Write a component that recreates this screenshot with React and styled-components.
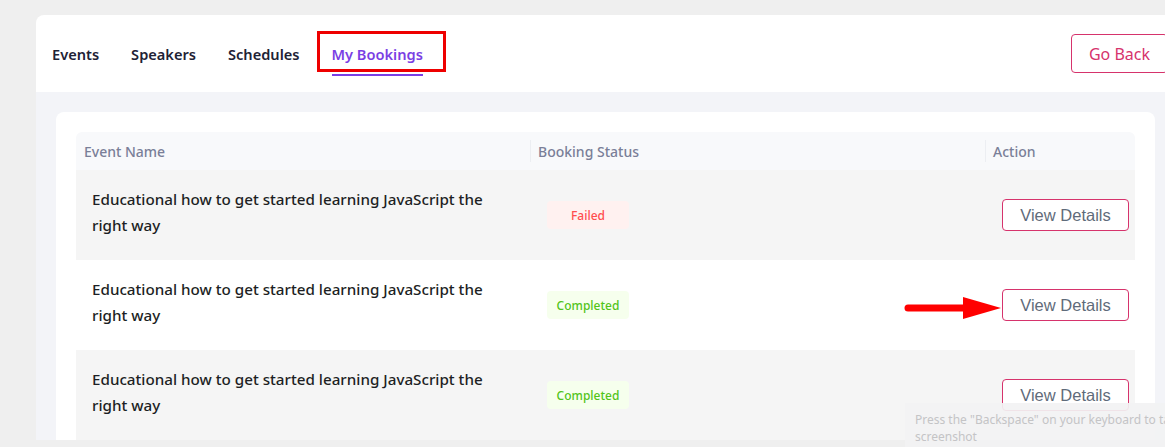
import React from 'react';
import styled, { createGlobalStyle } from 'styled-components';

const GlobalStyle = createGlobalStyle`
  body {
    margin: 0;
    background: #efefef;
    overflow: hidden;
    font-family: "Noto Sans", "Open Sans", sans-serif;
  }
`;

const Page = styled.div`
  position: relative;
  padding: 15px 0 0 36px;
  height: 432px;
`;

const Card = styled.div`
  width: 1150px;
  background: #fff;
  border-radius: 8px 8px 0 0;
  overflow: hidden;
`;

const Header = styled.div`
  height: 77px;
  display: flex;
  align-items: center;
  justify-content: space-between;
  padding: 0 18px 0 16px;
`;

const Tabs = styled.nav`
  display: flex;
  align-items: center;
  gap: 32px;
  height: 100%;
`;

const Tab = styled.div`
  position: relative;
  height: 100%;
  display: flex;
  align-items: center;
  font-size: 14.6px;
  font-weight: 600;
  color: ${(p) => (p.$active ? '#7b3fe4' : '#1e2235')};

  &::after {
    content: '';
    display: ${(p) => (p.$active ? 'block' : 'none')};
    position: absolute;
    left: 0;
    right: 0;
    bottom: 16px;
    height: 2px;
    background: #7b3fe4;
  }
`;

// red annotation frame drawn over the active tab
const Highlight = styled.span`
  position: absolute;
  left: -15px;
  right: -23px;
  top: 16px;
  bottom: 20px;
  border: 3px solid #ee0000;
`;

const GoBack = styled.button`
  height: 39px;
  padding: 0 17px;
  background: #fff;
  border: 1px solid #d6336c;
  border-radius: 4px;
  color: #d6336c;
  font-family: inherit;
  font-size: 16px;
`;

const Body = styled.div`
  background: #f3f4f8;
  padding: 20px 0 0 20px;
`;

const Panel = styled.div`
  width: 1099px;
  box-sizing: border-box;
  background: #fff;
  border-radius: 8px 8px 0 0;
  padding: 20px 20px 0;
`;

const Table = styled.div`
  display: grid;
  grid-template-columns: 454px 455px 1fr;
`;

const HeadRow = styled.div`
  display: contents;
`;

const HeadCell = styled.div`
  position: relative;
  height: 38px;
  display: flex;
  align-items: center;
  padding-left: 8px;
  background: #f8f9fb;
  font-size: 14px;
  font-weight: 500;
  color: #7a7f98;
  border-radius: ${(p) => p.$radius || '0'};

  &::before {
    content: '';
    display: ${(p) => (p.$divider ? 'block' : 'none')};
    position: absolute;
    left: 0;
    top: 8px;
    bottom: 8px;
    width: 1px;
    background: #eceef2;
  }
`;

const Row = styled.div`
  position: relative;
  grid-column: 1 / -1;
  display: grid;
  grid-template-columns: 454px 455px 1fr;
  height: 90px;
  background: ${(p) => (p.$striped ? '#f5f5f5' : '#fff')};
`;

const TitleCell = styled.div`
  display: flex;
  align-items: center;
  padding: 0 16px 6px;
  font-size: 15.2px;
  font-weight: 500;
  line-height: 26px;
  color: #1d1f24;

  span {
    max-width: 405px;
  }
`;

const StatusCell = styled.div`
  display: flex;
  align-items: center;
  padding-left: 17px;
`;

const Badge = styled.span`
  width: 82px;
  height: 28px;
  display: flex;
  align-items: center;
  justify-content: center;
  border-radius: 4px;
  font-size: 12px;
  font-weight: 500;
  color: ${(p) => (p.$status === 'Failed' ? '#ff4d4f' : '#52c41a')};
  background: ${(p) => (p.$status === 'Failed' ? '#fff1f0' : '#f6ffed')};
`;

const ActionCell = styled.div`
  display: flex;
  align-items: center;
  justify-content: flex-end;
  padding-right: 6px;
`;

const DetailsButton = styled.button`
  height: 32px;
  width: 127px;
  background: #fff;
  border: 1px solid #d6336c;
  border-radius: 4px;
  color: #5f6b7a;
  font-family: "Liberation Sans", Arial, sans-serif;
  font-size: 16.5px;
`;

const Arrow = styled.svg`
  position: absolute;
  left: 827px;
  top: 35px;
`;

const Tooltip = styled.div`
  position: absolute;
  left: 905px;
  top: 403px;
  width: 300px;
  padding: 8px 10px 12px;
  background: rgba(242, 242, 243, 0.92);
  font-size: 12px;
  line-height: 17px;
  color: #c4c4c6;
`;

const bookings = [
  { name: 'Educational how to get started learning JavaScript the right way', status: 'Failed' },
  { name: 'Educational how to get started learning JavaScript the right way', status: 'Completed', arrow: true },
  { name: 'Educational how to get started learning JavaScript the right way', status: 'Completed' },
];

export default function App() {
  return (
    <>
      <GlobalStyle />
      <Page>
        <Card>
          <Header>
            <Tabs>
              <Tab>Events</Tab>
              <Tab>Speakers</Tab>
              <Tab>Schedules</Tab>
              <Tab $active>
                My Bookings
                <Highlight />
              </Tab>
            </Tabs>
            <GoBack>Go Back</GoBack>
          </Header>

          <Body>
            <Panel>
              <Table>
                <HeadRow>
                  <HeadCell $radius="6px 0 0 0">Event Name</HeadCell>
                  <HeadCell $divider>Booking Status</HeadCell>
                  <HeadCell $divider $radius="0 6px 0 0">Action</HeadCell>
                </HeadRow>
                {bookings.map((b, i) => (
                  <Row key={i} $striped={i % 2 === 0}>
                    <TitleCell><span>{b.name}</span></TitleCell>
                    <StatusCell>
                      <Badge $status={b.status}>{b.status}</Badge>
                    </StatusCell>
                    <ActionCell>
                      <DetailsButton>View Details</DetailsButton>
                    </ActionCell>
                    {b.arrow && (
                      <Arrow width="100" height="26" viewBox="0 0 100 26">
                        <line x1="5" y1="13" x2="64" y2="13" stroke="#ff0000" strokeWidth="7" strokeLinecap="round" />
                        <polygon points="60,2 98,13 60,24" fill="#ff0000" />
                      </Arrow>
                    )}
                  </Row>
                ))}
              </Table>
            </Panel>
          </Body>
        </Card>
        <Tooltip>Press the "Backspace" on your keyboard to take a screenshot</Tooltip>
      </Page>
    </>
  );
}
